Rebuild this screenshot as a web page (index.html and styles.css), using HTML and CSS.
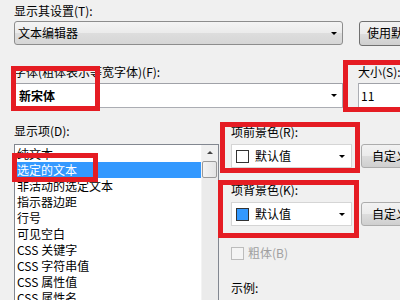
FILE: index.html
```html
<!DOCTYPE html>
<html lang="zh">
<head>
<meta charset="utf-8">
<link rel="stylesheet" href="styles.css">
</head>
<body>
<div class="dlg">
  <div class="label lbl-top">显示其设置(T):</div>
  <div class="row row-top">
    <div class="combo combo-ro combo-wide"><span>文本编辑器</span><span class="arrow"></span></div>
    <div class="btn btn-top">使用默认值(D)</div>
  </div>

  <div class="row row-font">
    <div class="col-font">
      <div class="label">字体(粗体表示等宽字体)(F):</div>
      <div class="combo combo-white combo-wide"><span class="font-name">新宋体</span><span class="arrow"></span></div>
    </div>
    <div class="col-size">
      <div class="label">大小(S):</div>
      <div class="combo combo-white combo-size"><span>11</span></div>
    </div>
  </div>

  <div class="row row-main">
    <div class="col-list">
      <div class="label">显示项(D):</div>
      <div class="listbox">
        <ul class="items">
          <li>纯文本</li>
          <li class="sel">选定的文本</li>
          <li>非活动的选定文本</li>
          <li>指示器边距</li>
          <li>行号</li>
          <li>可见空白</li>
          <li>CSS 关键字</li>
          <li>CSS 字符串值</li>
          <li>CSS 属性值</li>
          <li>CSS 属性名</li>
        </ul>
        <div class="vscroll">
          <div class="sb-up"><span class="up-tri"></span></div>
          <div class="sb-thumb"></div>
        </div>
      </div>
    </div>
    <div class="col-props">
      <div class="label lbl-fg">项前景色(R):</div>
      <div class="color-row">
        <div class="combo combo-white combo-color"><span class="swatch sw-white"></span><span class="cval">默认值</span><span class="arrow"></span></div>
        <div class="btn btn-custom">自定义(C)...</div>
      </div>
      <div class="label lbl-bg">项背景色(K):</div>
      <div class="color-row color-row2">
        <div class="combo combo-white combo-color"><span class="swatch sw-blue"></span><span class="cval">默认值</span><span class="arrow"></span></div>
        <div class="btn btn-custom">自定义(O)...</div>
      </div>
      <div class="check-row"><span class="checkbox"></span><span class="disabled">粗体(B)</span></div>
      <div class="label lbl-sample">示例:</div>
    </div>
  </div>

  <div class="hl hl-font"></div>
  <div class="hl hl-size"></div>
  <div class="hl hl-sel"></div>
  <div class="hl hl-fg"></div>
  <div class="hl hl-bg"></div>
</div>
</body>
</html>
```

FILE: styles.css
```css
html, body {
  margin: 0;
  padding: 0;
}
body {
  width: 400px;
  height: 300px;
  overflow: hidden;
  background: #f0f0f0;
  font-family: "Noto Sans CJK SC", "Noto Sans", sans-serif;
  font-size: 12px;
  color: #000;
}
.dlg {
  position: relative;
  width: 400px;
  height: 300px;
  overflow: hidden;
  padding-left: 14px;
  box-sizing: border-box;
}
.label {
  line-height: 16px;
  height: 16px;
  white-space: nowrap;
}
.lbl-top {
  padding-top: 3px;
}
.row {
  display: flex;
  align-items: flex-start;
}
.row > * {
  flex: none;
}
.row-top {
  margin-top: 2px;
  gap: 16px;
}
.combo {
  box-sizing: border-box;
  display: flex;
  align-items: center;
  position: relative;
  line-height: 16px;
  white-space: nowrap;
  flex: none;
}
.combo-wide {
  width: 329px;
}
.combo-ro {
  height: 24px;
  border: 1px solid #8d8d8d;
  border-radius: 3px;
  background: linear-gradient(#f4f4f4, #ebebeb 50%, #dddddd 51%, #d6d6d6);
  padding-left: 3px;
}
.combo-white {
  height: 25px;
  border: 1px solid #abadb3;
  border-top-color: #a0a2a8;
  background: #fff;
  padding-left: 3px;
}
.arrow {
  position: absolute;
  right: 5px;
  top: 10px;
  width: 0;
  height: 0;
  border-left: 3px solid transparent;
  border-right: 3px solid transparent;
  border-top: 3px solid #000;
}
.btn {
  box-sizing: border-box;
  height: 25px;
  border: 1px solid #707070;
  border-radius: 3px;
  background: linear-gradient(#f2f2f2, #ebebeb 50%, #dddddd 51%, #cfcfcf);
  padding-left: 8px;
  line-height: 22px;
  white-space: nowrap;
  width: 80px;
  flex: none;
}
.btn-top {
  padding-left: 7px;
}
.row-font {
  margin-top: 18px;
  gap: 15px;
}
.col-font .combo, .col-size .combo {
  margin-top: 3px;
}
.font-name {
  font-weight: 700;
  padding-left: 1px;
}
.combo-size {
  width: 60px;
  padding-left: 2px;
}
.row-main {
  margin-top: 15px;
  gap: 12px;
}
.col-list {
  width: 205px;
  flex: none;
}
.listbox {
  margin-top: 5px;
  height: 170px;
  box-sizing: border-box;
  border: 1px solid #828790;
  background: #fff;
  display: flex;
}
.items {
  list-style: none;
  margin: 0;
  padding: 1px 0 0 0;
  flex: 1;
}
.items li {
  height: 16px;
  line-height: 16px;
  padding-left: 2px;
  white-space: nowrap;
}
.items li.sel {
  background: #3399ff;
  color: #fff;
}
.vscroll {
  width: 16px;
  flex: none;
  background: #ebebeb;
  border-left: 1px solid #f3f3f3;
}
.sb-up {
  height: 16px;
  position: relative;
  background: #f0f0f0;
}
.up-tri {
  position: absolute;
  left: 5px;
  top: 6px;
  width: 0;
  height: 0;
  border-left: 3px solid transparent;
  border-right: 3px solid transparent;
  border-bottom: 3px solid #444;
}
.sb-thumb {
  box-sizing: border-box;
  margin: 0 1px 0 0;
  height: 17px;
  border: 1px solid #9a9a9a;
  border-radius: 2px;
  background: linear-gradient(90deg, #f4f4f4, #e4e4e4);
}
.col-props {
  display: flex;
  flex-direction: column;
}
.lbl-fg {
  padding-top: 1px;
}
.color-row {
  display: flex;
  gap: 9px;
  margin-top: 4px;
}
.combo-color {
  width: 121px;
  height: 24px;
  border-color: #d5d5d5;
  padding-left: 4px;
}
.swatch {
  box-sizing: border-box;
  width: 13px;
  height: 13px;
  border: 1px solid #333;
  flex: none;
}
.sw-white {
  background: #fff;
}
.sw-blue {
  background: #3399ff;
}
.cval {
  margin-left: 6px;
}
.combo-color .arrow {
  right: 6px;
  top: 10px;
}
.btn-custom {
  height: 24px;
  padding-left: 10px;
  border-color: #acacac;
}
.lbl-bg {
  margin-top: 14px;
}
.color-row2 {
  margin-top: 4px;
}
.check-row {
  margin-top: 19px;
  display: flex;
  align-items: center;
  gap: 4px;
  height: 16px;
  line-height: 16px;
}
.checkbox {
  box-sizing: border-box;
  width: 13px;
  height: 13px;
  border: 1px solid #bcbcbc;
  background: #f4f4f4;
}
.disabled {
  color: #a0a0a0;
}
.lbl-sample {
  margin-top: 19px;
}
.hl {
  position: absolute;
  box-sizing: border-box;
  border: 5px solid #e51c23;
  pointer-events: none;
}
.hl-font {
  left: 11px;
  top: 66px;
  width: 89px;
  height: 45px;
}
.hl-size {
  left: 343px;
  top: 60px;
  width: 70px;
  height: 52px;
}
.hl-sel {
  left: 12px;
  top: 153px;
  width: 86px;
  height: 29px;
}
.hl-fg {
  left: 220px;
  top: 122px;
  width: 140px;
  height: 51px;
}
.hl-bg {
  left: 218px;
  top: 180px;
  width: 141px;
  height: 58px;
}
```
